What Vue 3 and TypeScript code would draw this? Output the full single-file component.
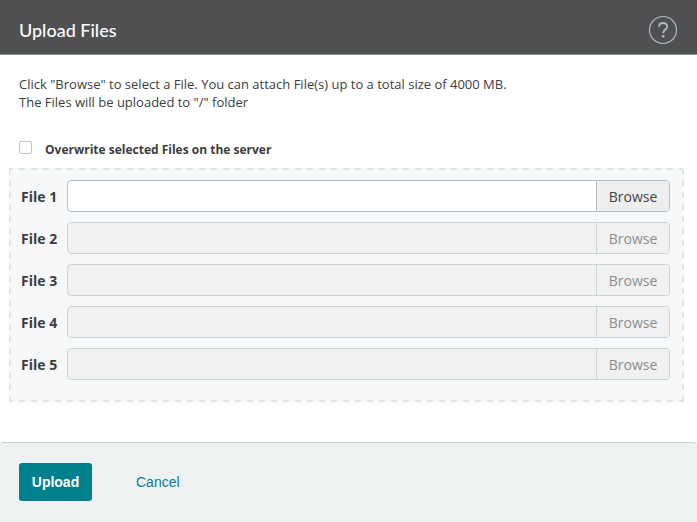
<script setup lang="ts">
import { ref } from 'vue'

interface FileRow {
  id: number
  name: string
  enabled: boolean
}

const overwrite = ref(false)
const rows = ref<FileRow[]>(
  [1, 2, 3, 4, 5].map((id) => ({ id, name: '', enabled: id === 1 })),
)
</script>

<template>
  <form class="dialog" @submit.prevent>
    <header class="header">
      <h1 class="title">Upload Files</h1>
      <button type="button" class="help">
        <svg viewBox="0 0 30 30" width="30" height="30" aria-hidden="true">
          <circle cx="15" cy="15" r="13.5" fill="none" stroke="#b4b7bd" stroke-width="1.2" />
          <path
            d="M11 11.6C11.2 9.2 12.7 8 15 8c2.4 0 4.1 1.4 4.1 3.6 0 1.7-.9 2.5-2.1 3.4-1.3 1-1.8 1.6-1.8 3.2"
            fill="none"
            stroke="#b4b7bd"
            stroke-width="1.8"
          />
          <circle cx="15.2" cy="21.3" r="1.3" fill="#b4b7bd" />
        </svg>
      </button>
    </header>

    <main class="content">
      <p class="intro">
        Click "Browse" to select a File. You can attach File(s) up to a total size of 4000 MB.<br />
        The Files will be uploaded to "/" folder
      </p>

      <div class="option">
        <input id="overwrite" v-model="overwrite" type="checkbox" class="check" />
        <label for="overwrite">Overwrite selected Files on the server</label>
      </div>

      <section class="files">
        <div v-for="row in rows" :key="row.id" class="row">
          <label :for="`file-${row.id}`" class="name">File {{ row.id }}</label>
          <div class="group" :class="{ off: !row.enabled }">
            <input :id="`file-${row.id}`" v-model="row.name" type="text" class="path" :disabled="!row.enabled" />
            <button type="button" class="browse" :disabled="!row.enabled">Browse</button>
          </div>
        </div>
      </section>
    </main>

    <footer class="footer">
      <button type="submit" class="upload">Upload</button>
      <a href="#" class="cancel">Cancel</a>
    </footer>
  </form>
</template>

<style>
body {
  background: #fff;
}
</style>

<style scoped>
.dialog {
  display: flex;
  flex-direction: column;
  min-height: 100vh;
  font: 13px/18px 'Open Sans', sans-serif;
  color: #3d3d3d;
}

.header {
  display: flex;
  align-items: center;
  justify-content: space-between;
  box-sizing: border-box;
  height: 55px;
  padding: 6px 19px 0;
  background: #4e5051;
  border-bottom: 1px solid #8f9597;
}

.title {
  margin: 0;
  font: 500 18px/24px Lato, sans-serif;
  color: #fff;
}

.help {
  display: flex;
  padding: 0;
  border: 0;
  background: none;
}

.content {
  flex: 1;
  padding: 20px 13px 40px 9px;
}

.intro {
  margin: 0 10px;
}

.option {
  display: flex;
  align-items: center;
  gap: 13px;
  margin: 30px 10px 9px;
  font-size: 12px;
  font-weight: 700;
}

.check {
  appearance: none;
  box-sizing: border-box;
  width: 13px;
  height: 13px;
  margin: 0 0 5px;
  border: 1px solid #c3c5c5;
  border-radius: 2px;
  background: #fff;
}

.check:checked {
  background: #007f8c;
}

.files {
  --dash: #dfe6e6 0 6px, transparent 6px 12px;
  display: flex;
  flex-direction: column;
  gap: 10px;
  padding: 12px 14px 22px 12px;
  background:
    repeating-linear-gradient(90deg, var(--dash)) -2px 0 / calc(100% + 12px) 2px no-repeat,
    repeating-linear-gradient(90deg, var(--dash)) -2px 100% / calc(100% + 12px) 2px no-repeat,
    repeating-linear-gradient(180deg, var(--dash)) 0 0 / 2px 100% no-repeat,
    repeating-linear-gradient(180deg, var(--dash)) 100% 0 / 2px 100% no-repeat,
    #f6f8fa;
}

.row {
  display: flex;
  align-items: center;
}

.name {
  width: 46px;
  padding-top: 2px;
  font-size: 14px;
  font-weight: 700;
}

.group {
  display: flex;
  flex: 1;
  box-sizing: border-box;
  height: 32px;
  overflow: hidden;
  border: 1px solid #b2bfc4;
  border-radius: 4px;
  background: #fff;
}

.path {
  flex: 1;
  min-width: 0;
  padding: 0 8px;
  border: 0;
  background: none;
  font: inherit;
}

.browse {
  box-sizing: border-box;
  width: 73px;
  padding: 2px 0 0;
  border: 0;
  border-left: 1px solid #b2bfc4;
  background: #eee;
  font: 14px/20px 'Open Sans', sans-serif;
  color: #444;
}

.off {
  border-color: #cad3d6;
  background: #f1f1f1;
}

.off .browse {
  border-color: #cad3d6;
  background: #f1f1f1;
  color: #8b8e8e;
}

.footer {
  display: flex;
  align-items: center;
  gap: 44px;
  box-sizing: border-box;
  height: 80px;
  padding: 0 19px 2px;
  border-top: 1px solid #c6d0d3;
  border-radius: 4px 4px 0 0;
  background: #edf1f2;
  font: 14px/18px 'Liberation Sans', sans-serif;
}

.upload {
  width: 73px;
  height: 38px;
  padding: 0;
  border: 0;
  border-radius: 3px;
  background: #007f8c;
  font: inherit;
  font-weight: 700;
  color: #fff;
}

.cancel {
  color: #0e7b96;
  text-decoration: none;
}
</style>
